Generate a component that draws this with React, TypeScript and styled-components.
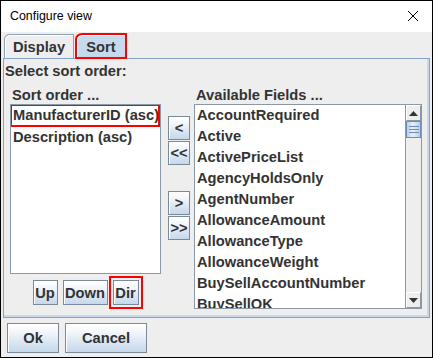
import React from 'react';
import styled, { createGlobalStyle } from 'styled-components';

const GlobalStyle = createGlobalStyle`
  html, body {
    margin: 0;
    padding: 0;
    background: #ffffff;
  }
  * {
    box-sizing: border-box;
  }
`;

const Window = styled.div`
  width: 433px;
  height: 358px;
  border: 1px solid #000000;
  background: #eeeeee;
  display: flex;
  flex-direction: column;
  font-family: "Liberation Sans", Arial, sans-serif;
  color: #333333;
  overflow: hidden;
`;

const TitleBar = styled.div`
  height: 31px;
  flex-shrink: 0;
  background: #ffffff;
  display: flex;
  align-items: center;
  justify-content: space-between;
  padding: 0 13px 1px 9px;
  font-size: 12.4px;
  color: #000000;
`;

const CloseIcon = styled.svg`
  width: 12px;
  height: 12px;
`;

const TabRow = styled.div`
  display: flex;
  align-items: flex-end;
  height: 25px;
  padding: 0 0 0 3px;
  margin-top: 1px;
  flex-shrink: 0;
`;

const Tab = styled.div<{ $selected?: boolean; $marked?: boolean; $width: number }>`
  width: ${p => p.$width}px;
  height: 24px;
  margin-right: 2px;
  display: flex;
  align-items: center;
  justify-content: center;
  font-size: 14.7px;
  font-weight: 700;
  border: 1px solid #8da0b4;
  border-bottom: none;
  border-top-left-radius: 6px 5px;
  background: ${p => (p.$selected ? '#c6daee' : '#eeeeee')};
  box-shadow: inset 1px 1px 0 #ffffff;
  outline: ${p => (p.$marked ? '2px solid #ff0000' : 'none')};
  outline-offset: -1px;
  position: relative;
  z-index: 1;
`;

const Panel = styled.div`
  height: 260px;
  margin: 0 2px;
  border: 1px solid #87a3cb;
  box-shadow: inset -2px -2px 0 #c8d8ec;
  display: flex;
  flex-direction: column;
  flex-shrink: 0;
`;

const Heading = styled.div`
  padding: 3px 0 0 1px;
  line-height: 18px;
  font-size: 14.7px;
  font-weight: 700;
`;

const Columns = styled.div`
  display: flex;
  margin-top: 7px;
`;

const Column = styled.div<{ $width: number; $left: number }>`
  width: ${p => p.$width}px;
  margin-left: ${p => p.$left}px;
  display: flex;
  flex-direction: column;
`;

const ColumnLabel = styled.div`
  height: 17px;
  line-height: 17px;
  padding-left: 2px;
  font-size: 14.7px;
  font-weight: 700;
  white-space: nowrap;
`;

const ListBox = styled.div<{ $height: number }>`
  height: ${p => p.$height}px;
  background: #ffffff;
  border: 1px solid #8a99a8;
  display: flex;
  overflow: hidden;
`;

const ListItems = styled.div`
  flex: 1;
  display: flex;
  flex-direction: column;
  overflow: hidden;
`;

const ListItem = styled.div<{ $marked?: boolean }>`
  height: 21px;
  flex-shrink: 0;
  line-height: 21px;
  padding-left: 2px;
  font-size: 14.7px;
  font-weight: 700;
  white-space: nowrap;
  outline: ${p => (p.$marked ? '2px solid #ff0000' : 'none')};
  outline-offset: -2px;
  ${p => (p.$marked ? 'height: 23px; line-height: 23px; margin-top: -1px; margin-left: -1px; padding-left: 3px;' : '')}
`;

const ScrollBar = styled.div`
  width: 16px;
  flex-shrink: 0;
  border-left: 1px solid #8a99a8;
  background: #eeeeee;
  display: flex;
  flex-direction: column;
`;

const ScrollArrow = styled.div`
  height: 16px;
  display: flex;
  align-items: center;
  justify-content: center;
  background: #eeeeee;
  border: 1px solid #ffffff;
  border-right-color: #8a99a8;
  border-bottom-color: #8a99a8;
`;

const ScrollThumb = styled.div`
  height: 17px;
  background: linear-gradient(90deg, #b8cfe5 0%, #e8f0f8 45%, #b8cfe5 100%);
  border: 1px solid #6d8cb8;
  display: flex;
  flex-direction: column;
  align-items: center;
  justify-content: center;
  gap: 2px;
`;

const Grip = styled.div`
  width: 10px;
  height: 1px;
  background: #6d8cb8;
`;

const ScrollTrack = styled.div`
  flex: 1;
`;

const ButtonRow = styled.div`
  display: flex;
  justify-content: center;
  gap: 5px;
  margin-top: 6px;
`;

const Button = styled.button<{ $width: number; $height?: number; $marked?: boolean }>`
  width: ${p => p.$width}px;
  height: ${p => p.$height ?? 25}px;
  padding: 0;
  font-family: "Liberation Sans", Arial, sans-serif;
  font-size: 14.7px;
  font-weight: 700;
  color: #333333;
  border: 1px solid #7a8a99;
  background: linear-gradient(180deg, #ffffff 0%, #f2f6fa 30%, #dde8f3 60%, #c5d8eb 100%);
  box-shadow: inset 1px 1px 0 #ffffff;
  display: flex;
  align-items: center;
  justify-content: center;
  outline: ${p => (p.$marked ? '2px solid #ff0000' : 'none')};
  outline-offset: 2px;
`;

const MoveColumn = styled.div`
  width: 22px;
  margin-left: 7px;
  padding-top: 29px;
  display: flex;
  flex-direction: column;
  gap: 1px;
`;

const MoveGap = styled.div`
  height: 24px;
`;

const Footer = styled.div`
  display: flex;
  gap: 6px;
  margin: 5px 0 0 6px;
`;

const sortItems = ['ManufacturerID (asc)', 'Description (asc)'];

const availableFields = [
  'AccountRequired',
  'Active',
  'ActivePriceList',
  'AgencyHoldsOnly',
  'AgentNumber',
  'AllowanceAmount',
  'AllowanceType',
  'AllowanceWeight',
  'BuySellAccountNumber',
  'BuySellOK',
];

const Triangle = ({ up }: { up: boolean }) => (
  <svg width="9" height="5" viewBox="0 0 9 5">
    <path d={up ? 'M0 5 L4.5 0 L9 5 Z' : 'M0 0 L9 0 L4.5 5 Z'} fill="#333333" />
  </svg>
);

const App: React.FC = () => {
  return (
    <>
      <GlobalStyle />
      <Window>
        <TitleBar>
          <span>Configure view</span>
          <CloseIcon viewBox="0 0 12 12">
            <path d="M1 1 L11 11 M11 1 L1 11" stroke="#000000" strokeWidth="1" fill="none" />
          </CloseIcon>
        </TitleBar>

        <TabRow>
          <Tab $width={70}>Display</Tab>
          <Tab $width={50} $selected $marked>Sort</Tab>
        </TabRow>

        <Panel>
          <Heading>Select sort order:</Heading>
          <Columns>
            <Column $width={151} $left={6}>
              <ColumnLabel>Sort order ...</ColumnLabel>
              <ListBox $height={170}>
                <ListItems>
                  {sortItems.map((item, i) => (
                    <ListItem key={item} $marked={i === 0}>{item}</ListItem>
                  ))}
                </ListItems>
              </ListBox>
              <ButtonRow>
                <Button $width={25}>Up</Button>
                <Button $width={45}>Down</Button>
                <Button $width={26} $marked>Dir</Button>
              </ButtonRow>
            </Column>

            <MoveColumn>
              <Button $width={22} $height={24}>&lt;</Button>
              <Button $width={22} $height={24}>&lt;&lt;</Button>
              <MoveGap />
              <Button $width={22} $height={24}>&gt;</Button>
              <Button $width={22} $height={24}>&gt;&gt;</Button>
            </MoveColumn>

            <Column $width={228} $left={4}>
              <ColumnLabel>Available Fields ...</ColumnLabel>
              <ListBox $height={205}>
                <ListItems>
                  {availableFields.map(f => (
                    <ListItem key={f}>{f}</ListItem>
                  ))}
                </ListItems>
                <ScrollBar>
                  <ScrollArrow><Triangle up /></ScrollArrow>
                  <ScrollThumb>
                    <Grip />
                    <Grip />
                    <Grip />
                  </ScrollThumb>
                  <ScrollTrack />
                  <ScrollArrow><Triangle up={false} /></ScrollArrow>
                </ScrollBar>
              </ListBox>
            </Column>
          </Columns>
        </Panel>

        <Footer>
          <Button $width={52} $height={30}>Ok</Button>
          <Button $width={82} $height={30}>Cancel</Button>
        </Footer>
      </Window>
    </>
  );
};

export default App;
